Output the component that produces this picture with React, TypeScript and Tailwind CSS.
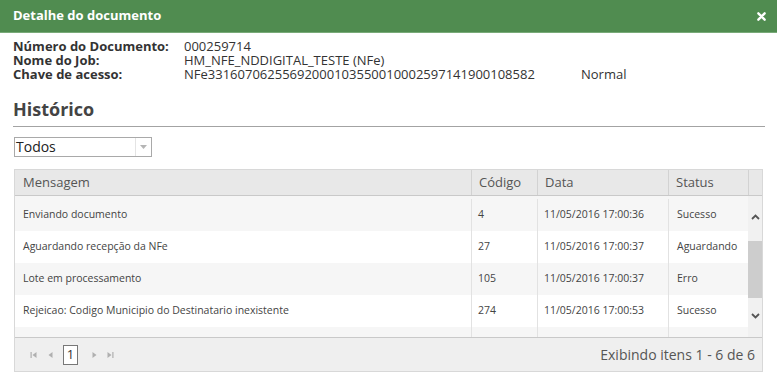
import React from "react";

const rows = [
  { msg: "Enviando documento", code: "4", date: "11/05/2016 17:00:36", status: "Sucesso" },
  { msg: "Aguardando recepção da NFe", code: "27", date: "11/05/2016 17:00:37", status: "Aguardando" },
  { msg: "Lote em processamento", code: "105", date: "11/05/2016 17:00:37", status: "Erro" },
  { msg: "Rejeicao: Codigo Municipio do Destinatario inexistente", code: "274", date: "11/05/2016 17:00:53", status: "Sucesso" },
];

const App: React.FC = () => {
  return (
    <div className="w-[777px] h-[378px] bg-white overflow-hidden font-['Open_Sans',sans-serif] text-[#333]">
      {/* title bar */}
      <div className="h-[33px] bg-[#508c50] border-b border-[#78aa78] flex items-center justify-between pl-[13px] pr-[11px]">
        <span className="text-white font-bold text-[13px]">Detalhe do documento</span>
        <svg width="9" height="9" viewBox="0 0 10 10">
          <path d="M1.5 1.5 L8.5 8.5 M8.5 1.5 L1.5 8.5" stroke="white" strokeWidth="2.6" strokeLinecap="round" />
        </svg>
      </div>

      <div className="px-[13px]">
        {/* document info */}
        <div className="pt-[6px] text-[13px] leading-[14px]">
          <div className="flex h-[14px]">
            <span className="w-[171px] font-bold">Número do Documento:</span>
            <span>000259714</span>
          </div>
          <div className="flex h-[14px]">
            <span className="w-[171px] font-bold">Nome do Job:</span>
            <span>HM_NFE_NDDIGITAL_TESTE (NFe)</span>
          </div>
          <div className="flex h-[14px]">
            <span className="w-[171px] font-bold">Chave de acesso:</span>
            <span className="w-[397px]">NFe33160706255692000103550010002597141900108582</span>
            <span>Normal</span>
          </div>
        </div>

        <div className="mt-[17px] text-[18px] leading-[22px] font-bold text-[#444]">Histórico</div>
        <div className="mt-[6px] h-px bg-[#a3a3a3] mr-[-1px]"></div>

        {/* filter */}
        <div className="mt-[10px] ml-px w-[138px] h-[20px] border border-[#a9a9a9] bg-white flex items-center justify-between">
          <span className="text-[14px] text-[#222] leading-none pl-[1px]">Todos</span>
          <span className="h-full w-[16px] border-l border-[#e4e4e4] flex items-center justify-center">
            <svg width="7" height="4" viewBox="0 0 7 4">
              <path d="M0 0 L7 0 L3.5 4 Z" fill="#b5b5b5" />
            </svg>
          </span>
        </div>

        {/* grid */}
        <div className="mt-[12px] ml-px w-[749px] border border-[#d8d8d8]">
          <div className="flex h-[26px] bg-[#e8e8e8] border-b border-[#c9c9c9] text-[13px] text-[#555]">
            <div className="w-[456px] pl-[8px] flex items-center">Mensagem</div>
            <div className="w-[66px] pl-[7px] flex items-center border-l border-[#d2d2d2]">Código</div>
            <div className="w-[131px] pl-[7px] flex items-center border-l border-[#d2d2d2]">Data</div>
            <div className="w-[80px] pl-[7px] flex items-center border-l border-[#d2d2d2]">Status</div>
            <div className="flex-1 border-l border-[#d2d2d2]"></div>
          </div>

          <div className="flex h-[141px]">
            <div className="w-[733px] text-[10.5px] text-[#444]">
              {rows.map((r, i) => (
                <div
                  key={i}
                  className={`flex ${i === 0 ? "h-[35px] pt-[3px]" : "h-[32px]"} ${i % 2 === 0 ? "bg-[#f6f6f6]" : "bg-white"}`}
                >
                  <div className="w-[456px] pl-[8px] flex items-center">{r.msg}</div>
                  <div className="w-[66px] pl-[6px] flex items-center border-l border-[#e2e2e2]">{r.code}</div>
                  <div className="w-[131px] pl-[6px] flex items-center border-l border-[#e2e2e2]">{r.date}</div>
                  <div className="w-[80px] pl-[8px] flex items-center border-l border-[#e2e2e2]">{r.status}</div>
                </div>
              ))}
              <div className="flex h-[10px] bg-[#f6f6f6]">
                <div className="w-[456px]"></div>
                <div className="w-[66px] border-l border-[#e2e2e2]"></div>
                <div className="w-[131px] border-l border-[#e2e2e2]"></div>
                <div className="w-[80px] border-l border-[#e2e2e2]"></div>
              </div>
            </div>

            {/* scrollbar */}
            <div className="flex-1 bg-[#f1f1f1] flex flex-col items-center">
              <div className="h-[36px] w-full flex items-end justify-center pb-[12px]">
                <svg width="9" height="6" viewBox="0 0 9 6">
                  <path d="M1 5 L4.5 1.5 L8 5" stroke="#555" strokeWidth="1.8" fill="none" />
                </svg>
              </div>
              <div className="mt-[9px] h-[57px] w-[14px] bg-[#cdcdcd]"></div>
              <div className="mt-[15px] flex justify-center">
                <svg width="9" height="6" viewBox="0 0 9 6">
                  <path d="M1 1 L4.5 4.5 L8 1" stroke="#555" strokeWidth="1.8" fill="none" />
                </svg>
              </div>
            </div>
          </div>

          {/* pager */}
          <div className="h-[34px] bg-[#efefef] border-t border-[#c9c9c9] flex items-center justify-between pl-[15px] pr-[7px]">
            <div className="flex items-center text-[#aaa]">
              <svg width="8" height="8" viewBox="0 0 8 8" className="mr-[9px]">
                <rect x="0.5" y="1" width="1.2" height="6" fill="#b0b0b0" />
                <path d="M6.5 1 L2.5 4 L6.5 7 Z" fill="#b0b0b0" />
              </svg>
              <svg width="8" height="8" viewBox="0 0 8 8" className="mr-[8px]">
                <path d="M5.5 1 L1.5 4 L5.5 7 Z" fill="#b0b0b0" />
              </svg>
              <div className="w-[15px] h-[20px] border border-[#777] bg-white flex items-center justify-center text-[13px] text-[#333] leading-none">
                1
              </div>
              <svg width="8" height="8" viewBox="0 0 8 8" className="ml-[12px]">
                <path d="M2.5 1 L6.5 4 L2.5 7 Z" fill="#b0b0b0" />
              </svg>
              <svg width="8" height="8" viewBox="0 0 8 8" className="ml-[8px]">
                <path d="M1.5 1 L5.5 4 L1.5 7 Z" fill="#b0b0b0" />
                <rect x="6.3" y="1" width="1.2" height="6" fill="#b0b0b0" />
              </svg>
            </div>
            <span className="text-[14px] text-[#555]">Exibindo itens 1 - 6 de 6</span>
          </div>
        </div>
      </div>
    </div>
  );
};

export default App;
